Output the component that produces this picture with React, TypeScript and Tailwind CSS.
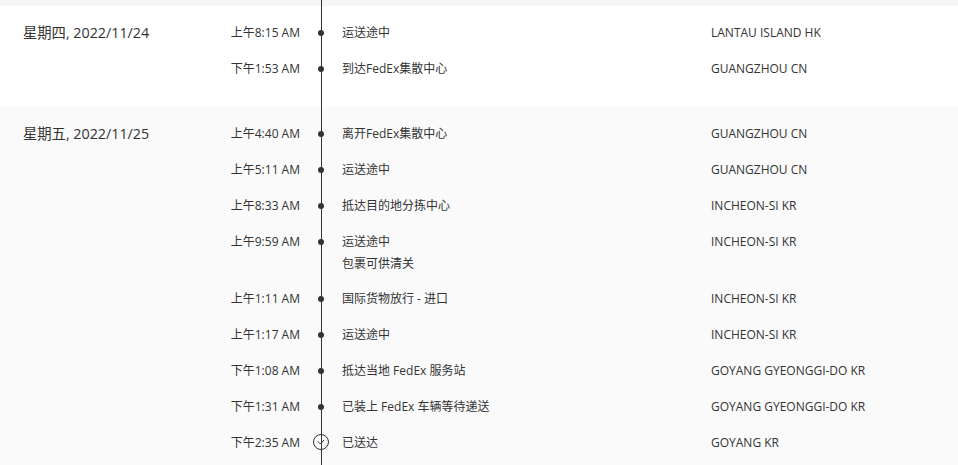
type Ev = { time: string; desc: string[]; loc: string; done?: boolean };
type Day = { date: string; bg: string; pt: string; events: Ev[] };

const DAYS: Day[] = [
  {
    date: '星期四, 2022/11/24',
    bg: 'bg-white',
    pt: 'pt-[9px] pb-[20px]',
    events: [
      { time: '上午8:15 AM', desc: ['运送途中'], loc: 'LANTAU ISLAND HK' },
      { time: '下午1:53 AM', desc: ['到达FedEx集散中心'], loc: 'GUANGZHOU CN' },
    ],
  },
  {
    date: '星期五, 2022/11/25',
    bg: 'bg-[#fafafa]',
    pt: 'pt-[9px] pb-[20px]',
    events: [
      { time: '上午4:40 AM', desc: ['离开FedEx集散中心'], loc: 'GUANGZHOU CN' },
      { time: '上午5:11 AM', desc: ['运送途中'], loc: 'GUANGZHOU CN' },
      { time: '上午8:33 AM', desc: ['抵达目的地分拣中心'], loc: 'INCHEON-SI KR' },
      { time: '上午9:59 AM', desc: ['运送途中', '包裹可供清关'], loc: 'INCHEON-SI KR' },
      { time: '上午1:11 AM', desc: ['国际货物放行 - 进口'], loc: 'INCHEON-SI KR' },
      { time: '上午1:17 AM', desc: ['运送途中'], loc: 'INCHEON-SI KR' },
      { time: '下午1:08 AM', desc: ['抵达当地 FedEx 服务站'], loc: 'GOYANG GYEONGGI-DO KR' },
      { time: '下午1:31 AM', desc: ['已装上 FedEx 车辆等待递送'], loc: 'GOYANG GYEONGGI-DO KR' },
      { time: '下午2:35 AM', desc: ['已送达'], loc: 'GOYANG KR', done: true },
    ],
  },
];

function Marker({ done }: { done?: boolean }) {
  if (done) {
    return (
      <svg width="16" height="16" viewBox="0 0 16 16" className="mt-[-3px]">
        <circle cx="8" cy="8" r="7.5" fill="#fafafa" stroke="#333" strokeWidth="1" />
        <path d="M5 7.5 L7.5 10 L11 6" fill="none" stroke="#333" strokeWidth="1" />
      </svg>
    );
  }
  return <div className="w-[6px] h-[6px] rounded-full bg-[#333]" />;
}

export default function App() {
  return (
    <div
      className="relative w-[958px] h-[465px] overflow-hidden bg-[#f5f5f5] text-[#333]"
      style={{ fontFamily: '"Open Sans", "Noto Sans CJK SC", sans-serif' }}
    >
      <div className="h-[6px]" />
      {DAYS.map((d) => (
        <div key={d.date} className={`${d.bg} ${d.pt} flex`}>
          <div className="w-[223px] pl-[23px] pt-[7px] text-[14.3px] leading-[22px]">{d.date}</div>
          <div className="flex-1">
            {d.events.map((e) => (
              <div key={e.time + e.desc[0]} className="flex min-h-[36px] pt-[7px] pb-[6px] text-[12px] leading-[22px]">
                <div className="w-[77px] text-right">{e.time}</div>
                <div className="w-[42px] h-[22px] flex items-center justify-center">
                  <Marker done={e.done} />
                </div>
                <div className="w-[369px]">
                  {e.desc.map((t) => (
                    <div key={t}>{t}</div>
                  ))}
                </div>
                <div>{e.loc}</div>
              </div>
            ))}
          </div>
        </div>
      ))}
      <div className="absolute left-[321px] top-0 bottom-0 w-px bg-[#333] pointer-events-none" />
    </div>
  );
}
